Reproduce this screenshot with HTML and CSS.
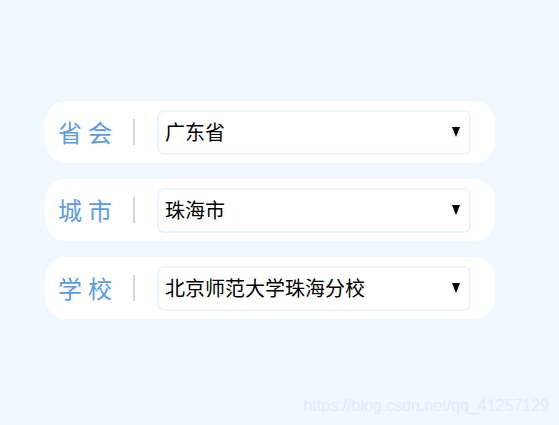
FILE: index.html
```html
<!DOCTYPE html>
<html lang="zh">
<head>
<meta charset="utf-8">
<title>地区选择</title>
<link rel="stylesheet" href="styles.css">
</head>
<body>
<div class="page">
  <div class="form">
    <div class="row">
      <span class="label">省会</span>
      <span class="sep"></span>
      <div class="select"><span class="value">广东省</span><span class="arrow"></span></div>
    </div>
    <div class="row">
      <span class="label">城市</span>
      <span class="sep"></span>
      <div class="select"><span class="value">珠海市</span><span class="arrow"></span></div>
    </div>
    <div class="row">
      <span class="label">学校</span>
      <span class="sep"></span>
      <div class="select"><span class="value">北京师范大学珠海分校</span><span class="arrow"></span></div>
    </div>
  </div>
  <div class="watermark">https://blog.csdn.net/qq_41257129</div>
</div>
</body>
</html>
```
FILE: styles.css
```css
html, body {
  margin: 0;
  padding: 0;
  background: #eff7ff;
}
.page {
  position: relative;
  width: 559px;
  height: 425px;
  overflow: hidden;
  font-family: "Noto Sans CJK SC", "Noto Sans", sans-serif;
}
.form {
  display: flex;
  flex-direction: column;
  gap: 16px;
  padding: 101px 0 0 45px;
}
.row {
  display: flex;
  align-items: center;
  box-sizing: border-box;
  width: 450px;
  height: 62px;
  padding: 0 24px 0 13px;
  background: #ffffff;
  border-radius: 21px;
}
.label {
  width: 60px;
  font-size: 24px;
  letter-spacing: 6px;
  color: #5a9be3;
  line-height: 1;
  white-space: nowrap;
}
.sep {
  width: 2px;
  height: 26px;
  margin-left: 15px;
  margin-right: 22px;
  background: #d4d6d9;
}
.select {
  flex: 1;
  box-sizing: border-box;
  height: 45px;
  display: flex;
  align-items: center;
  justify-content: space-between;
  padding: 0 9px 0 6px;
  border: 2px solid #eaf4ff;
  border-radius: 7px;
  background: #fff;
}
.value {
  font-size: 20px;
  color: #000;
  line-height: 1;
}
.arrow {
  width: 0;
  height: 0;
  border-left: 4.5px solid transparent;
  border-right: 4.5px solid transparent;
  border-top: 10px solid #000;
}
.watermark {
  position: absolute;
  right: 10px;
  bottom: 10px;
  font-family: "Liberation Sans", Arial, sans-serif;
  font-size: 16px;
  color: #e4eaf1;
}
```
